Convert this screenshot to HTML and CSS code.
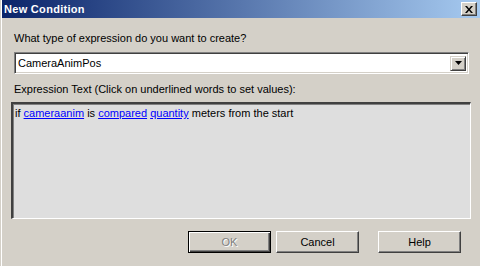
FILE: index.html
```html
<!DOCTYPE html>
<html lang="en">
<head>
  <meta charset="UTF-8">
  <title>New Condition</title>
  <link rel="stylesheet" href="styles.css">
</head>
<body>
  <div class="window">
    <div class="titlebar">
      <span class="title">New Condition</span>
      <span class="close-btn">
        <svg width="8" height="7" viewBox="0 0 8 7"><path d="M0 0h2l2 2.5L6 0h2L5 3.5 8 7H6L4 4.5 2 7H0l3-3.5z" fill="#000"/></svg>
      </span>
    </div>

    <div class="content">
      <p class="label">What type of expression do you want to create?</p>
      <div class="combo">
        <span class="combo-value">CameraAnimPos</span>
        <span class="combo-btn">
          <svg width="7" height="4" viewBox="0 0 7 4"><path d="M0 0h7L3.5 4z" fill="#000"/></svg>
        </span>
      </div>

      <p class="label label-expr">Expression Text (Click on underlined words to set values):</p>
      <div class="expr-box">
        if <a href="#">cameraanim</a> is <a href="#">compared</a> <a href="#">quantity</a> meters from the start
      </div>

      <div class="buttons">
        <button class="btn btn-default" disabled>OK</button>
        <button class="btn">Cancel</button>
        <button class="btn btn-help">Help</button>
      </div>
    </div>
  </div>
</body>
</html>
```

FILE: styles.css
```css
body {
  margin: 0;
  background: #d4d0c8;
  font-family: "Liberation Sans", Arial, sans-serif;
  font-size: 11px;
  color: #000;
  height: 266px;
  overflow: hidden;
}
.window {
  margin-left: 1px;
  border-left: 1px solid #fff;
  height: 266px;
}
.titlebar {
  height: 18px;
  background: linear-gradient(to right, #0a246a, #a6caf0);
  display: flex;
  align-items: center;
  justify-content: space-between;
  padding: 0 3px 0 2px;
}
.title {
  color: #fff;
  font-weight: bold;
  font-size: 11px;
  letter-spacing: 0.3px;
}
.close-btn {
  width: 12px;
  height: 10px;
  background: #d4d0c8;
  border-top: 1px solid #fff;
  border-left: 1px solid #fff;
  border-right: 1px solid #404040;
  border-bottom: 1px solid #404040;
  box-shadow: inset -1px -1px 0 #808080;
  display: flex;
  align-items: center;
  justify-content: center;
  padding: 1px;
}
.label {
  margin: 0;
  padding-left: 12px;
  line-height: 13px;
}
.label:first-child {
  margin-top: 14px;
}
.combo {
  margin: 7px 0 0 12px;
  width: 449px;
  height: 16px;
  background: #fff;
  border-top: 1px solid #808080;
  border-left: 1px solid #808080;
  border-right: 1px solid #fff;
  border-bottom: 1px solid #fff;
  box-shadow: inset 1px 1px 0 #404040, inset -1px -1px 0 #d4d0c8;
  padding: 2px;
  display: flex;
  align-items: center;
  justify-content: space-between;
}
.combo-value {
  padding-left: 1px;
}
.combo-btn {
  width: 12px;
  height: 13px;
  background: #d4d0c8;
  border-top: 1px solid #d4d0c8;
  border-left: 1px solid #d4d0c8;
  border-right: 1px solid #404040;
  border-bottom: 1px solid #404040;
  box-shadow: inset 1px 1px 0 #fff, inset -1px -1px 0 #808080;
  display: flex;
  align-items: center;
  justify-content: center;
  padding: 0 1px;
}
.label-expr {
  margin-top: 9px;
}
.expr-box {
  margin: 6px 0 0 9px;
  width: 455px;
  height: 111px;
  background: #dedede;
  border-top: 2px solid #404040;
  border-left: 2px solid #404040;
  border-right: 1px solid #fff;
  border-bottom: 1px solid #fff;
  box-shadow: inset 1px 1px 0 #808080;
  padding: 3px 0 0 2px;
  line-height: 13px;
}
.expr-box a {
  color: #0000ff;
  text-decoration: underline;
}
.buttons {
  display: flex;
  margin-top: 12px;
  padding-left: 186px;
}
.btn {
  width: 83px;
  height: 22px;
  padding: 0;
  margin-right: 5px;
  background: #d4d0c8;
  font-family: "Liberation Sans", Arial, sans-serif;
  font-size: 11px;
  color: #000;
  border-top: 1px solid #fff;
  border-left: 1px solid #fff;
  border-right: 1px solid #404040;
  border-bottom: 1px solid #404040;
  box-shadow: inset -1px -1px 0 #808080;
}
.btn-help {
  margin-left: 14px;
}
.btn-default {
  border: 1px solid #000;
  box-shadow: inset 1px 1px 0 #fff, inset -1px -1px 0 #404040, inset -2px -2px 0 #808080;
}
.btn:disabled {
  color: #808080;
  text-shadow: 1px 1px 0 #fff;
}
```
